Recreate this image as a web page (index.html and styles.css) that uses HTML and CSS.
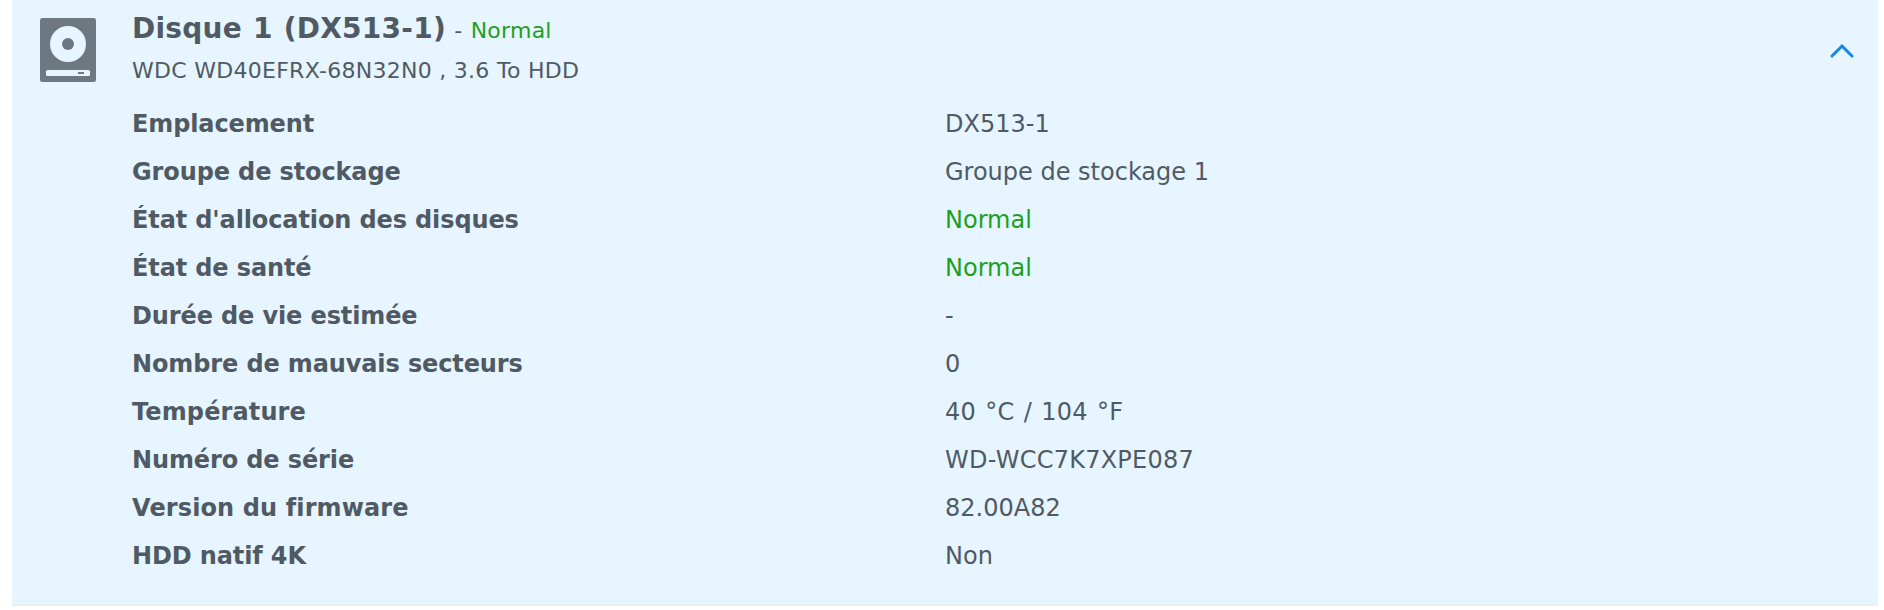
FILE: index.html
```
<!DOCTYPE html>
<html lang="fr">
<head>
  <meta charset="utf-8">
  <title>Disque 1</title>
  <link rel="stylesheet" href="styles.css">
</head>
<body>
  <div class="disk-panel">
    <div class="disk-header">
      <svg class="disk-icon" width="56" height="64" viewBox="0 0 56 64">
        <rect width="56" height="64" rx="2.5" fill="#6e7880"/>
        <circle cx="28" cy="26" r="18" fill="#e6f5ff"/>
        <circle cx="28" cy="26" r="6" fill="#6e7880"/>
        <rect x="6" y="52" width="44" height="6" rx="1.5" fill="#e6f5ff"/>
        <rect x="38" y="54" width="6" height="2" fill="#6e7880"/>
      </svg>
      <div class="disk-title">
        <div class="title-line"><span class="disk-name">Disque 1 (DX513-1)</span> - <span class="normal">Normal</span></div>
        <div class="model">WDC WD40EFRX-68N32N0 , 3.6 To HDD</div>
      </div>
      <svg class="arrow" width="26" height="18" viewBox="0 0 26 18">
        <path d="M3 14 L13 4 L23 14" fill="none" stroke="#1487eb" stroke-width="3" stroke-linecap="round"/>
      </svg>
    </div>
    <dl class="disk-info">
      <dt>Emplacement</dt><dd>DX513-1</dd>
      <dt>Groupe de stockage</dt><dd>Groupe de stockage 1</dd>
      <dt>État d'allocation des disques</dt><dd class="normal">Normal</dd>
      <dt>État de santé</dt><dd class="normal">Normal</dd>
      <dt>Durée de vie estimée</dt><dd>-</dd>
      <dt>Nombre de mauvais secteurs</dt><dd>0</dd>
      <dt class="wide">Température</dt><dd class="temp">40 °C / 104 °F</dd>
      <dt>Numéro de série</dt><dd class="serial">WD-WCC7K7XPE087</dd>
      <dt class="wide">Version du firmware</dt><dd>82.00A82</dd>
      <dt>HDD natif 4K</dt><dd>Non</dd>
    </dl>
  </div>
</body>
</html>
```
FILE: styles.css
```
* {
  box-sizing: border-box;
}

body {
  margin: 0;
  background-color: #fff;
  color: #505a64;
  font-family: Verdana, "DejaVu Sans", sans-serif;
  font-size: 24px;
}

.disk-panel {
  width: 1866px;
  height: 606px;
  margin-left: 12px;
  background-color: #e6f5ff;
  border-bottom: 2px solid #ebf0f5;
}

.disk-header {
  display: flex;
  height: 100px;
  padding: 8px 23px 0 28px;
}

.disk-icon {
  margin-top: 10px;
}

.disk-title {
  flex: 1;
  padding: 1px 0 0 36px;
}

.title-line {
  height: 40px;
  line-height: 40px;
  font-size: 22px;
  letter-spacing: 0.25px;
  word-spacing: 1px;
}

.disk-name {
  font-size: 28px;
  font-weight: bold;
}

.model {
  line-height: 44px;
  font-size: 22px;
  letter-spacing: 0.28px;
}

.normal {
  color: #1ea01e;
}

.arrow {
  margin-top: 34px;
}

.disk-info {
  display: grid;
  grid-template-columns: 813px 1fr;
  margin: 0;
  padding-left: 120px;
  line-height: 48px;
}

dt {
  font-weight: bold;
  letter-spacing: -0.12px;
}

dd {
  margin: 0;
}

.wide {
  letter-spacing: 0.12px;
}

.temp {
  word-spacing: 1.5px;
  letter-spacing: 0.2px;
}

.serial {
  letter-spacing: 0.25px;
}
```
